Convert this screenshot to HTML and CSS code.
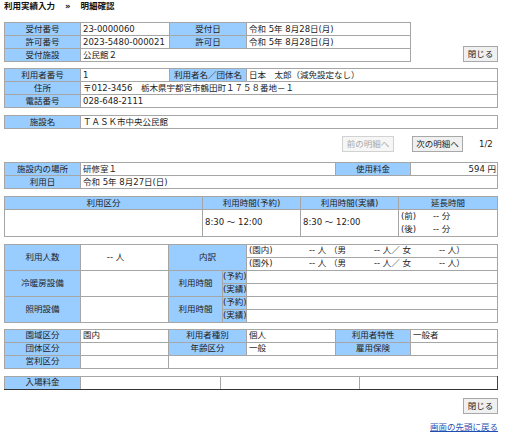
FILE: index.html
```html
<!DOCTYPE html>
<html lang="ja">
<head>
<meta charset="utf-8">
<link rel="stylesheet" href="styles.css">
</head>
<body>
<div class="title">利用実績入力<span class="sep">»</span>明細確認</div>

<div class="top">
  <table class="grid t1">
    <colgroup><col class="c76"><col class="c89"><col class="c77"><col></colgroup>
    <tr><th>受付番号</th><td>23-0000060</td><th>受付日</th><td>令和 5年 8月28日(月)</td></tr>
    <tr><th>許可番号</th><td>2023-5480-000021</td><th>許可日</th><td>令和 5年 8月28日(月)</td></tr>
    <tr><th>受付施設</th><td colspan="3">公民館２</td></tr>
  </table>
  <button class="btn close">閉じる</button>
</div>

<table class="grid mt6">
  <colgroup><col class="c76"><col class="c89"><col class="c77"><col></colgroup>
  <tr><th>利用者番号</th><td>1</td><th>利用者名／団体名</th><td>日本　太郎（減免設定なし）</td></tr>
  <tr><th>住所</th><td colspan="3">〒012-3456　栃木県宇都宮市鶴田町１７５８番地－１</td></tr>
  <tr><th>電話番号</th><td colspan="3">028-648-2111</td></tr>
</table>

<table class="grid mt7">
  <colgroup><col class="c76"><col></colgroup>
  <tr><th>施設名</th><td>ＴＡＳＫ市中央公民館</td></tr>
</table>

<div class="nav">
  <button class="btn prev" disabled>前の明細へ</button>
  <button class="btn next">次の明細へ</button>
  <span class="page">1/2</span>
</div>

<table class="grid mt10">
  <colgroup><col class="c76"><col class="c255"><col class="c75"><col></colgroup>
  <tr><th>施設内の場所</th><td>研修室１</td><th>使用料金</th><td class="num">594 円</td></tr>
  <tr><th>利用日</th><td colspan="3">令和 5年 8月27日(日)</td></tr>
</table>

<table class="grid mt7">
  <colgroup><col class="c198"><col class="c98"><col class="c98"><col></colgroup>
  <tr><th>利用区分</th><th>利用時間(予約)</th><th>利用時間(実績)</th><th>延長時間</th></tr>
  <tr class="tall">
    <td></td>
    <td>8:30 ～ 12:00</td>
    <td>8:30 ～ 12:00</td>
    <td><div class="ln"><span class="ext">(前)</span>-- 分</div><div class="ln"><span class="ext">(後)</span>-- 分</div></td>
  </tr>
</table>

<table class="grid mt7 t6">
  <colgroup><col class="c76"><col class="c88"><col class="c54"><col class="c24"><col></colgroup>
  <tr><th rowspan="2">利用人数</th><td rowspan="2" class="cnt">-- 人</td><th rowspan="2" colspan="2">内訳</th>
    <td><span class="area">(園内)</span><span class="p1">-- 人 （男</span><span class="p1">-- 人／ 女</span><span>-- 人）</span></td></tr>
  <tr><td><span class="area">(園外)</span><span class="p1">-- 人 （男</span><span class="p1">-- 人／ 女</span><span>-- 人）</span></td></tr>
  <tr class="grp"><th rowspan="2">冷暖房設備</th><td rowspan="2"></td><th rowspan="2">利用時間</th><th class="sub">(予約)</th><td></td></tr>
  <tr><th class="sub">(実績)</th><td></td></tr>
  <tr class="grp"><th rowspan="2">照明設備</th><td rowspan="2"></td><th rowspan="2">利用時間</th><th class="sub">(予約)</th><td></td></tr>
  <tr><th class="sub">(実績)</th><td></td></tr>
</table>

<table class="grid mt6">
  <colgroup><col class="c76"><col class="c88"><col class="c78"><col class="c89"><col class="c75"><col></colgroup>
  <tr><th>園域区分</th><td>園内</td><th>利用者種別</th><td>個人</td><th>利用者特性</th><td>一般者</td></tr>
  <tr><th>団体区分</th><td></td><th>年齢区分</th><td>一般</td><th>雇用保険</th><td></td></tr>
  <tr><th>営利区分</th><td></td><td colspan="4"></td></tr>
</table>

<table class="grid mt7 t8">
  <colgroup><col class="c76"><col class="c140"><col class="c139"><col></colgroup>
  <tr><th>入場料金</th><td></td><td></td><td></td></tr>
</table>

<div class="bottom">
  <button class="btn close">閉じる</button>
</div>
<div class="linkrow"><a href="#" class="toplink">画面の先頭に戻る</a></div>
</body>
</html>
```

FILE: styles.css
```css
* { box-sizing: border-box; }
html, body { background: #fff; }
body {
  margin: 0;
  padding: 1px 4px 0 4px;
  width: 502px;
  font-family: "DejaVu Sans", "Noto Sans CJK JP", sans-serif;
  font-size: 8.5px;
  color: #222;
}
.title {
  font-weight: bold;
  line-height: 10px;
  height: 21px;
  color: #111;
}
.title .sep { margin: 0 10px 0 10px; font-weight: bold; }

.top {
  display: flex;
  justify-content: space-between;
  align-items: flex-end;
  width: 494px;
}

.grid {
  border-collapse: collapse;
  table-layout: fixed;
  width: 494px;
}
.grid.t1 { width: 407px; }
.grid th, .grid td {
  border: 1px solid #a6a6a6;
  padding: 0 2px;
  height: 13px;
  line-height: 11px;
  font-weight: normal;
  white-space: nowrap;
  overflow: hidden;
  text-align: left;
  vertical-align: middle;
}
.grid th {
  background: #99ccff;
  text-align: center;
  color: #222;
}
.grid th.sub { padding: 0; }
.grid td.num { text-align: right; padding-right: 1px; }
.grid td.cnt { text-align: center; padding-right: 20px; }

.c24 { width: 24px; }
.c54 { width: 54px; }
.c75 { width: 75px; }
.c76 { width: 76px; }
.c77 { width: 77px; }
.c78 { width: 78px; }
.c88 { width: 88px; }
.c89 { width: 89px; }
.c98 { width: 98px; }
.c139 { width: 139px; }
.c140 { width: 140px; }
.c198 { width: 198px; }
.c255 { width: 255px; }

.mt6 { margin-top: 6px; }
.mt7 { margin-top: 7px; }
.mt10 { margin-top: 10px; }

.grid .tall td { height: 26.5px; }
.ln { line-height: 12.5px; }
.ext { display: inline-block; width: 32px; }

.area { display: inline-block; width: 60px; }
.p1 { display: inline-block; width: 65px; }

.t6 tr.grp > * { border-top-color: #b8b8b8; }
.t8 td, .t8 th { border-bottom-color: #333; }
.t8 td:last-child { border-right-color: #444; }

.btn {
  font-family: inherit;
  font-size: 8.5px;
  line-height: 12px;
  height: 16px;
  padding: 0;
  background: #f0f0f0;
  border: 1px solid #a8a8a8;
  border-radius: 0;
  color: #222;
  display: block;
}
.btn.close { width: 35px; }
.btn.prev { width: 52px; color: #a8a8a8; background: #f6f6f6; border-color: #d2d2d2; }
.btn.next { width: 51px; margin-left: 18px; }

.nav {
  display: flex;
  justify-content: flex-end;
  align-items: center;
  width: 494px;
  height: 16px;
  margin-top: 7px;
}
.page { margin-left: 16px; width: 19px; line-height: 12px; }

.bottom {
  display: flex;
  justify-content: flex-end;
  width: 494px;
  margin-top: 8px;
}
.linkrow {
  width: 494px;
  text-align: right;
  margin-top: 8px;
  line-height: 11px;
}
.toplink { color: #1f4fb5; text-decoration: underline; }
```
